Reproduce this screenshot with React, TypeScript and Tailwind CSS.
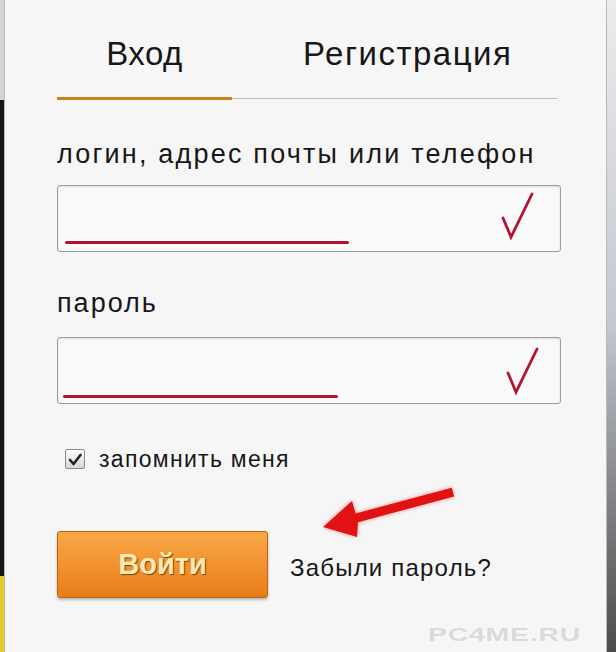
import React from "react";

function RedCheck({ left, top }: { left: number; top: number }) {
  return (
    <svg
      className="absolute"
      style={{ left, top }}
      width="40"
      height="50"
      viewBox="0 0 40 50"
    >
      <path
        d="M4 26 L12 45 L33 2"
        fill="none"
        stroke="#b5122f"
        strokeWidth="2.8"
        strokeLinecap="round"
        strokeLinejoin="miter"
      />
    </svg>
  );
}

function Field({
  lineWidth,
  lineLeft,
  lineTop,
  checkLeft,
  checkTop,
}: {
  lineWidth: number;
  lineLeft: number;
  lineTop: number;
  checkLeft: number;
  checkTop: number;
}) {
  return (
    <div className="relative h-[67px] w-[504px] rounded-[3px] border border-[#9c9c9c] bg-[#f9f9f9] shadow-[inset_0_1px_2px_rgba(0,0,0,0.12)]">
      <div
        className="absolute h-[3px] rounded-full bg-[#b01231]"
        style={{ left: lineLeft, top: lineTop, width: lineWidth }}
      />
      <RedCheck left={checkLeft} top={checkTop} />
    </div>
  );
}

export default function App() {
  return (
    <div className="flex h-[652px] w-[616px] overflow-hidden bg-[#f6f6f6] font-['Liberation_Sans',Arial,sans-serif] text-[#171717]">
      {/* left edge of the page behind */}
      <div className="flex w-[4px] flex-col">
        <div className="h-[100px] bg-[#d4d4d4]" />
        <div className="flex-1 bg-[#161616]" />
        <div className="h-[76px] bg-[#e4cd25]" />
      </div>

      <div className="relative flex flex-1 flex-col border-x border-[#b8b8b8] bg-[#f6f6f6] pl-[52px] pt-[38px]">
        {/* tabs */}
        <div className="flex h-[32px] items-center text-[33px] leading-[32px]">
          <div className="w-[175px] text-center tracking-[0.5px]">Вход</div>
          <div className="ml-[71px] tracking-[1.5px]">Регистрация</div>
        </div>
        <div className="mt-[27px] flex items-center">
          <div className="h-[3px] w-[175px] bg-[#c98218]" />
          <div className="h-px w-[325px] bg-[#b9b9b9]" />
        </div>

        {/* login */}
        <div className="mt-[41px] text-[27px] leading-[27px] tracking-[2.2px]">
          логин, адрес почты или телефон
        </div>
        <div className="mt-[17px]">
          <Field lineLeft={7} lineTop={55} lineWidth={284} checkLeft={441} checkTop={6} />
        </div>

        {/* password */}
        <div className="mt-[38px] text-[27px] leading-[27px] tracking-[2px]">
          пароль
        </div>
        <div className="mt-[20px]">
          <Field lineLeft={5} lineTop={57} lineWidth={275} checkLeft={446} checkTop={9} />
        </div>

        {/* remember */}
        <div className="mt-[44px] flex h-[22px] items-center">
          <div className="ml-[8px] flex h-[20px] w-[20px] items-center justify-center rounded-[2px] border border-[#8a8a8a] bg-linear-to-b from-[#fdfdfd] to-[#d6d6d6]">
            <svg width="14" height="13" viewBox="0 0 14 13">
              <path
                d="M2 7 L5.5 11 L12.5 2"
                fill="none"
                stroke="#222"
                strokeWidth="2.6"
                strokeLinecap="round"
                strokeLinejoin="round"
              />
            </svg>
          </div>
          <span className="ml-[14px] text-[23px] tracking-[1.3px]">запомнить меня</span>
        </div>

        {/* submit */}
        <div className="mt-[61px] flex items-center">
          <button className="h-[67px] w-[211px] rounded-[3px] border border-[#b9650f] bg-linear-to-b from-[#f7a845] via-[#f29230] to-[#e87d16] text-[29px] font-bold text-[#fbeab5] shadow-[0_2px_3px_rgba(0,0,0,0.25)] [text-shadow:1px_1px_1px_rgba(110,55,0,0.9)]">
            Войти
          </button>
          <a className="ml-[22px] mt-[6px] text-[24px] tracking-[1.2px] text-[#171717]">
            Забыли пароль?
          </a>
        </div>

        {/* watermark */}
        <div className="mt-[27px] flex justify-end pr-[25px]">
          <span className="origin-right scale-x-[1.5] text-[19px] leading-[20px] font-black tracking-[0.5px] text-[#dadada]">
            PC4ME.RU
          </span>
        </div>

        {/* red arrow annotation */}
        <svg
          className="absolute left-[295px] top-[470px] drop-shadow-[0_0_2px_rgba(255,80,80,0.6)]"
          width="180"
          height="80"
          viewBox="0 0 180 80"
        >
          <polygon
            points="23,57 52,31 55.6,43.6 151.8,17.7 154.2,26.4 58,52.2 57,67"
            fill="#e01212"
          />
        </svg>
      </div>

      {/* right edge of the page behind */}
      <div className="w-[9px] bg-linear-to-b from-[#ececec] via-[#c3c7cf] to-[#4c4c4c]" />
    </div>
  );
}
